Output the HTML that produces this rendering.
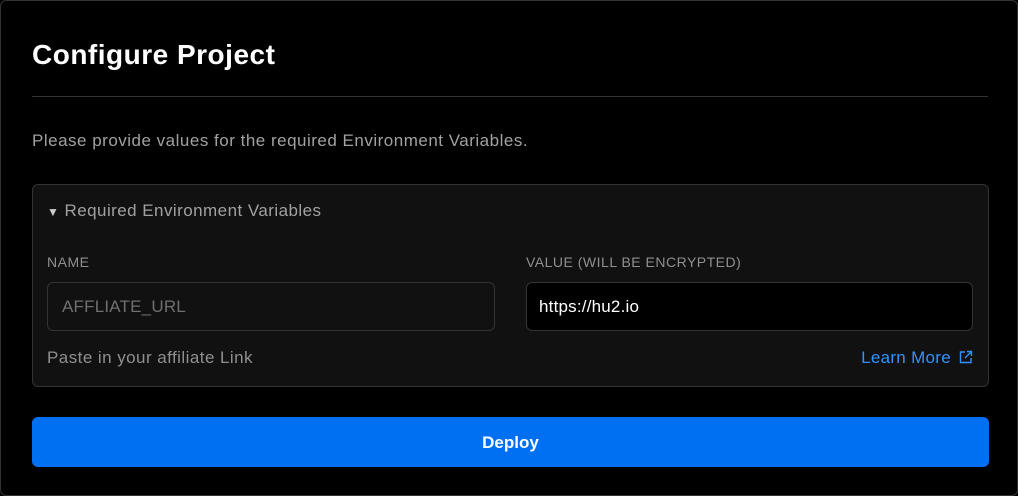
<!DOCTYPE html><html><head><style>
*{box-sizing:border-box;margin:0;padding:0}
body{width:1018px;height:496px;background:#000;font-family:"Liberation Sans",sans-serif;overflow:hidden}
.frame{position:absolute;left:0;top:0;width:1018px;height:496px;border:1px solid #333;border-radius:6px}
.abs{position:absolute;white-space:nowrap}
h1{position:absolute;left:32px;top:39px;font-size:28px;font-weight:bold;color:#fff;letter-spacing:0.5px}
.hr{left:32px;top:96px;width:956px;height:1px;background:#333}
.desc{left:32px;top:131px;font-size:17px;color:#a1a1a1;letter-spacing:0.5px}
.box{left:32px;top:184px;width:957px;height:203px;background:#111;border:1px solid #333;border-radius:6px}
.t{font-size:17px;color:#a1a1a1;letter-spacing:0.45px}
.lbl{font-size:14px;color:#8f8f8f;top:254px;letter-spacing:0.5px}
.inp{top:282px;height:49px;border:1px solid #333;border-radius:6px;font-size:17px;padding:0 0 0 14px;line-height:47px;letter-spacing:0.2px}
.btn{left:32px;top:417px;width:957px;height:50px;background:#0070f3;border-radius:6px;color:#fff;font-size:17px;font-weight:bold;text-align:center;line-height:52px}
</style></head><body>
<div class="frame"></div>
<h1>Configure Project</h1>
<div class="abs hr"></div>
<div class="abs desc">Please provide values for the required Environment Variables.</div>
<div class="abs box"></div>
<div class="abs t" style="left:47px;top:201px"><span style="font-size:12px;color:#ccc">▼</span> Required Environment Variables</div>
<div class="abs lbl" style="left:47px">NAME</div>
<div class="abs lbl" style="left:526px">VALUE (WILL BE ENCRYPTED)</div>
<div class="abs inp" style="left:47px;width:448px;background:#111;color:#6f6f6f">AFFLIATE_URL</div>
<div class="abs inp" style="left:526px;width:447px;background:#000;color:#fff;padding-left:12px">https://hu2.io</div>
<div class="abs t" style="left:47px;top:348px;color:#8f8f8f">Paste in your affiliate Link</div>
<div class="abs" style="right:45px;top:348px;font-size:17px;color:#3291ff;letter-spacing:0.3px">Learn More<svg width="14" height="14" viewBox="0 0 14 14" style="vertical-align:-1px;margin-left:8px" fill="none" stroke="#3291ff" stroke-width="1.4"><path d="M6 2H1.5v10.5H12V8M8 1.5h4.5V6M12.5 1.5L6 8"/></svg></div>
<div class="abs btn">Deploy</div>
</body></html>
